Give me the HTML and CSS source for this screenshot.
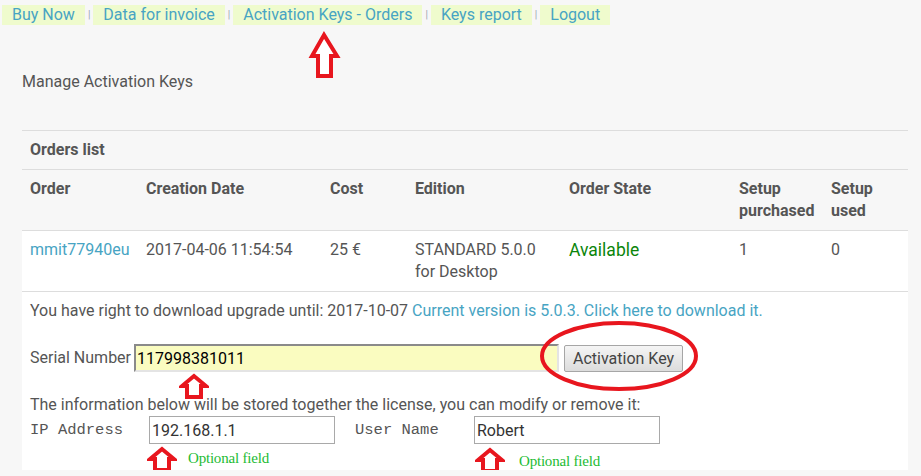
FILE: index.html
```html
<!DOCTYPE html>
<html lang="en">
<head>
    <meta charset="UTF-8">
    <meta name="viewport" content="width=device-width, initial-scale=1.0">
    <title>Manage Activation Keys</title>
    <link rel="stylesheet" href="styles.css">
</head>
<body>

    <!-- Top menu -->
    <div class="topnav">
        <a href="#" class="nav-item">Buy Now</a><span class="sep">|</span>
        <a href="#" class="nav-item">Data for invoice</a><span class="sep">|</span>
        <a href="#" class="nav-item">Activation Keys - Orders</a><span class="sep">|</span>
        <a href="#" class="nav-item">Keys report</a><span class="sep">|</span>
        <a href="#" class="nav-item">Logout</a>
    </div>

    <p class="page-title">Manage Activation Keys</p>

    <div class="panel">
        <table class="orders">
            <colgroup>
                <col class="c-order">
                <col class="c-date">
                <col class="c-cost">
                <col class="c-edition">
                <col class="c-state">
                <col class="c-purchased">
                <col class="c-used">
            </colgroup>
            <tr class="grey-row">
                <th colspan="7">Orders list</th>
            </tr>
            <tr class="grey-row">
                <th>Order</th>
                <th>Creation Date</th>
                <th>Cost</th>
                <th>Edition</th>
                <th>Order State</th>
                <th>Setup<br>purchased</th>
                <th>Setup<br>used</th>
            </tr>
            <tr>
                <td><a href="#" class="link">mmit77940eu</a></td>
                <td>2017-04-06 11:54:54</td>
                <td>25 &euro;</td>
                <td>STANDARD 5.0.0<br>for Desktop</td>
                <td><span class="state-ok">Available</span></td>
                <td>1</td>
                <td>0</td>
            </tr>
            <tr>
                <td colspan="7" class="key-cell">
                    <p class="upgrade">You have right to download upgrade until: 2017-10-07 <a href="#" class="link">Current version is 5.0.3. Click here to download it.</a></p>

                    <div class="serial-row">
                        <span>Serial Number</span>
                        <input type="text" class="serial-input" value="117998381011">
                        <button class="key-btn">Activation Key</button>
                    </div>

                    <p class="info">The information below will be stored together the license, you can modify or remove it:</p>

                    <div class="extra-row">
                        <span class="mono-label">IP Address</span>
                        <input type="text" class="extra-input" value="192.168.1.1">
                        <span class="mono-label second">User Name</span>
                        <input type="text" class="extra-input" value="Robert">
                    </div>
                </td>
            </tr>
        </table>
    </div>

    <!-- Red annotations drawn over the page -->
    <svg class="mark arrow-big" viewBox="0 0 33 50" width="33" height="50">
        <polygon points="16,4 4,25 10,25 10,45 23,45 23,25 29,25" fill="#fff" stroke="#e8161e" stroke-width="4"/>
    </svg>
    <svg class="mark arrow-serial" viewBox="0 0 30 26" width="30" height="26">
        <polygon points="15,3 3,13 8,13 8,24 22,24 22,13 27,13" fill="#fff" stroke="#e8161e" stroke-width="4"/>
    </svg>
    <svg class="mark arrow-ip" viewBox="0 0 30 26" width="30" height="26">
        <polygon points="15,3 3,13 8,13 8,24 22,24 22,13 27,13" fill="#fff" stroke="#e8161e" stroke-width="4"/>
    </svg>
    <svg class="mark arrow-user" viewBox="0 0 30 26" width="30" height="26">
        <polygon points="15,3 3,13 8,13 8,24 22,24 22,13 27,13" fill="#fff" stroke="#e8161e" stroke-width="4"/>
    </svg>
    <svg class="mark key-ring" viewBox="0 0 162 74" width="162" height="74">
        <ellipse cx="81" cy="37" rx="77" ry="33" fill="none" stroke="#e8161e" stroke-width="4"/>
    </svg>
    <span class="mark optional opt-ip">Optional field</span>
    <span class="mark optional opt-user">Optional field</span>

</body>
</html>
```

FILE: styles.css
```css
* {
    box-sizing: border-box;
}

body {
    margin: 0;
    position: relative;
    font-family: 'Roboto', 'Liberation Sans', sans-serif;
    font-size: 16px;
    line-height: 22px;
    color: #555;
    background-color: #f7f7f7;
}

a {
    text-decoration: none;
}

/* top menu */
.topnav {
    display: flex;
    align-items: center;
    padding: 5px 0 0 2px;
}

.nav-item {
    display: inline-block;
    height: 20px;
    line-height: 20px;
    padding: 0 10px;
    background-color: #effbcd;
    color: #47a4c3;
}

.sep {
    font-size: 10px;
    line-height: 10px;
    margin: 0 3px;
    color: #9aa4ad;
}

.page-title {
    margin: 46px 0 0 22px;
    font-size: 16px;
}

/* orders table */
.panel {
    margin: 37px 13px 0 22px;
}

.orders {
    width: 886px;
    border-collapse: collapse;
    table-layout: fixed;
}

.c-order { width: 116px; }
.c-date { width: 184px; }
.c-cost { width: 85px; }
.c-edition { width: 154px; }
.c-state { width: 170px; }
.c-purchased { width: 92px; }
.c-used { width: 85px; }

.orders tr {
    border-top: 1px solid #ddd;
    background-color: #fff;
}

.orders tr.grey-row {
    background-color: #f7f7f7;
}

.orders th,
.orders td {
    padding: 8px;
    text-align: left;
    vertical-align: top;
}

.orders th {
    font-weight: bold;
}

.link {
    color: #47a4c3;
}

.state-ok {
    color: #0a850a;
    font-size: 17.5px;
}

.orders td.key-cell {
    padding-bottom: 26px;
}

.upgrade,
.info {
    margin: 0;
}

.info {
    margin-top: 22px;
}

.serial-row {
    display: flex;
    align-items: center;
    margin-top: 22px;
    height: 28px;
}

.serial-input {
    width: 425px;
    height: 28px;
    margin-left: 3px;
    padding: 0 1px;
    font-family: 'Roboto', 'Liberation Sans', sans-serif;
    font-size: 16px;
    color: #000;
    background-color: #fafcc0;
    border-top: 2px solid #8a8a8a;
    border-left: 2px solid #8a8a8a;
    border-bottom: 2px solid #e4e4e4;
    border-right: 2px solid #e4e4e4;
    outline: none;
}

.key-btn {
    height: 27px;
    margin-left: 5px;
    padding: 0 8px;
    font-family: 'Roboto', 'Liberation Sans', sans-serif;
    font-size: 16px;
    color: #444;
    background: linear-gradient(#f5f5f5, #dcdcdc);
    border: 1px solid #a6a6a6;
    border-radius: 2px;
    cursor: pointer;
}

.extra-row {
    display: flex;
    align-items: center;
    height: 28px;
}

.mono-label {
    width: 119px;
    font-family: 'Liberation Mono', 'Courier New', monospace;
    font-size: 15.5px;
    color: #555;
}

.mono-label.second {
    margin-left: 20px;
}

.extra-input {
    width: 186px;
    height: 28px;
    padding: 0 2px;
    font-family: 'Roboto', 'Liberation Sans', sans-serif;
    font-size: 16px;
    color: #333;
    background-color: #fff;
    border: 1px solid #a9a9a9;
    outline: none;
}

/* annotations */
.mark {
    position: absolute;
}

.arrow-big { left: 308px; top: 31px; }
.arrow-serial { left: 179px; top: 373px; }
.arrow-ip { left: 147px; top: 446px; }
.arrow-user { left: 475px; top: 447px; }
.key-ring { left: 538px; top: 319px; }

.optional {
    font-family: 'Liberation Serif', 'Times New Roman', serif;
    font-size: 15px;
    line-height: 18px;
    letter-spacing: -0.2px;
    color: #22bb33;
}

.opt-ip { left: 188px; top: 449px; }
.opt-user { left: 519px; top: 452px; }
```
